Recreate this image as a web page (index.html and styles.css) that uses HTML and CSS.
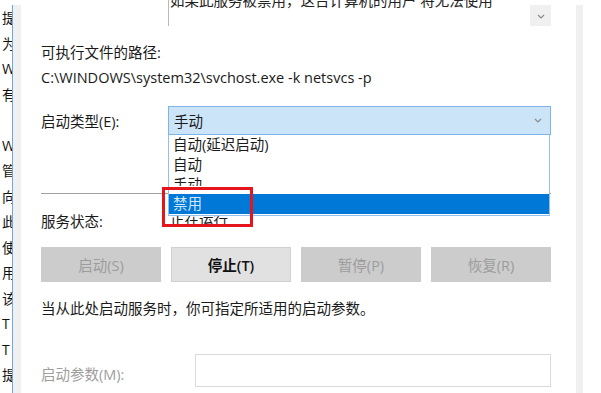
FILE: index.html
```html
<!DOCTYPE html>
<html>

<head>
    <title>服务属性</title>
    <meta name="viewport" content="width=device-width,initial-scale=1">
    <link rel="stylesheet" href="styles.css">
</head>

<body>
    <div class="screen">
        <!-- Left pane, mostly hidden behind the dialog -->
        <div class="side-list">
            <span>提</span>
            <span>为</span>
            <span>W</span>
            <span>有</span>
            <span>&nbsp;</span>
            <span>W</span>
            <span>管</span>
            <span>向</span>
            <span>此</span>
            <span>使</span>
            <span>用</span>
            <span>该</span>
            <span>T</span>
            <span>T</span>
            <span>提</span>
        </div>
        <div class="gutter"></div>

        <div class="panel">
            <div class="desc-box">
                <p class="desc-text">如果此服务被禁用，这台计算机的用户 将无法使用</p>
                <span class="scroll-btn">
                    <svg viewBox="0 0 8 5" class="chevron">
                        <polyline points="1 1 4 4 7 1" />
                    </svg>
                </span>
            </div>

            <p class="field-label">可执行文件的路径:</p>
            <p class="path">C:\WINDOWS\system32\svchost.exe -k netsvcs -p</p>

            <div class="form-row startup">
                <span class="label">启动类型(E):</span>
                <div class="combo">
                    <div class="combo-value">
                        <span>手动</span>
                        <svg viewBox="0 0 8 5" class="chevron">
                            <polyline points="1 1 4 4 7 1" />
                        </svg>
                    </div>
                    <ul class="combo-list">
                        <li>自动(延迟启动)</li>
                        <li>自动</li>
                        <li class="cut">手动</li>
                        <li class="selected">禁用</li>
                    </ul>
                </div>
            </div>

            <hr class="divider">

            <div class="form-row status">
                <span class="label">服务状态:</span>
                <span class="value">正在运行</span>
            </div>

            <div class="buttons">
                <button class="btn" disabled>启动(S)</button>
                <button class="btn active">停止(T)</button>
                <button class="btn" disabled>暂停(P)</button>
                <button class="btn" disabled>恢复(R)</button>
            </div>

            <p class="hint">当从此处启动服务时，你可指定所适用的启动参数。</p>

            <div class="form-row params">
                <span class="label muted">启动参数(M):</span>
                <div class="text-input"></div>
            </div>

            <!-- red annotation frame -->
            <div class="highlight"></div>
        </div>

        <div class="gutter right"></div>
    </div>
</body>

</html>
```

FILE: styles.css
```css
body {
    margin: 0;
    background-color: #ffffff;
    font-family: "Open Sans", "Noto Sans CJK SC", sans-serif;
    font-size: 14.5px;
    color: #1a1a1a;
    overflow: hidden;
}

p {
    margin: 0;
}

.screen {
    display: flex;
    height: 393px;
}

/* Narrow strip of the services list on the left */
.side-list {
    width: 10px;
    padding-left: 2px;
    margin-top: 5px;
    overflow: hidden;
    white-space: nowrap;
    border-right: 1px solid #6ea8e6;
    display: flex;
    flex-direction: column;
    font-size: 14px;
    line-height: 25.5px;
    color: #111;
}

.gutter {
    width: 8px;
    margin-top: 5px;
    background-color: #f0f0f0;
}

.gutter.right {
    width: 7px;
    margin-right: 18px;
}

/* The dialog page itself */
.panel {
    position: relative;
    width: 510px;
    padding: 0 25px 0 20px;
}

.desc-box {
    display: flex;
    margin-left: 127px;
    height: 26px;
    border-left: 1px solid #b9b9b9;
    overflow: hidden;
}

.desc-text {
    flex: 1;
    margin-top: -9px;
    padding-left: 1px;
    line-height: 20px;
    white-space: nowrap;
    color: #222;
}

.scroll-btn {
    width: 21px;
    height: 22px;
    margin-top: 5px;
    background-color: #f0f0f0;
    display: flex;
    align-items: center;
    justify-content: center;
}

.chevron {
    width: 8px;
    height: 5px;
    fill: none;
    stroke: #8a8a8a;
    stroke-width: 1.2;
}

.field-label {
    margin-top: 15px;
    line-height: 24px;
}

.path {
    line-height: 25px;
}

.form-row {
    display: flex;
    align-items: center;
}

.form-row .label {
    width: 127px;
    flex-shrink: 0;
}

.startup {
    margin-top: 16px;
    align-items: stretch;
}

.startup .label {
    padding-top: 2px;
    line-height: 27px;
}

.combo {
    position: relative;
    flex: 1;
}

.combo-value {
    height: 27px;
    border: 1px solid #7eb4ea;
    background-color: #cce4f7;
    display: flex;
    align-items: center;
    justify-content: space-between;
    padding: 0 8px 0 5px;
}

/* Opened drop-down list lies over the rows below */
.combo-list {
    position: absolute;
    top: 100%;
    left: 0;
    right: 1px;
    z-index: 2;
    margin: 0;
    padding: 0;
    list-style: none;
    background-color: #ffffff;
    border: 1px solid #8fc0ee;
    border-top: none;
    height: 80px;
    overflow: hidden;
}

.combo-list li {
    padding-left: 4px;
    line-height: 20px;
    height: 20px;
}

.combo-list li.cut {
    height: 11px;
    overflow: hidden;
    margin-bottom: 8px;
}

.combo-list li.selected {
    background-color: #0078d7;
    color: #d4e8fb;
}

.divider {
    margin: 58px 0 0;
    border: none;
    border-top: 1px solid #a0a0a0;
}

.status {
    margin-top: 16px;
    line-height: 24px;
}

.status .value {
    padding-left: 2px;
    margin-top: -5px;
}

.buttons {
    display: grid;
    grid-template-columns: repeat(4, 1fr);
    gap: 10px;
    margin-top: 13px;
}

.btn {
    height: 35px;
    font-family: inherit;
    font-size: 14.5px;
    border: 1px solid #cccccc;
    background-color: #cccccc;
    color: #9c9c9c;
    padding: 0;
}

.btn.active {
    background-color: #e1e1e1;
    border-color: #d0d0d0;
    color: #111;
    font-weight: 600;
}

.hint {
    margin-top: 15px;
    line-height: 24px;
}

.params {
    margin-top: 33px;
}

.params .label {
    width: 154px;
    padding-top: 6px;
}

.muted {
    color: #9e9e9e;
}

.text-input {
    flex: 1;
    height: 31px;
    border: 1px solid #dadada;
}

.highlight {
    position: absolute;
    left: 141px;
    top: 187px;
    width: 85px;
    height: 34px;
    border: 3px solid #e5141d;
    z-index: 3;
}
```
